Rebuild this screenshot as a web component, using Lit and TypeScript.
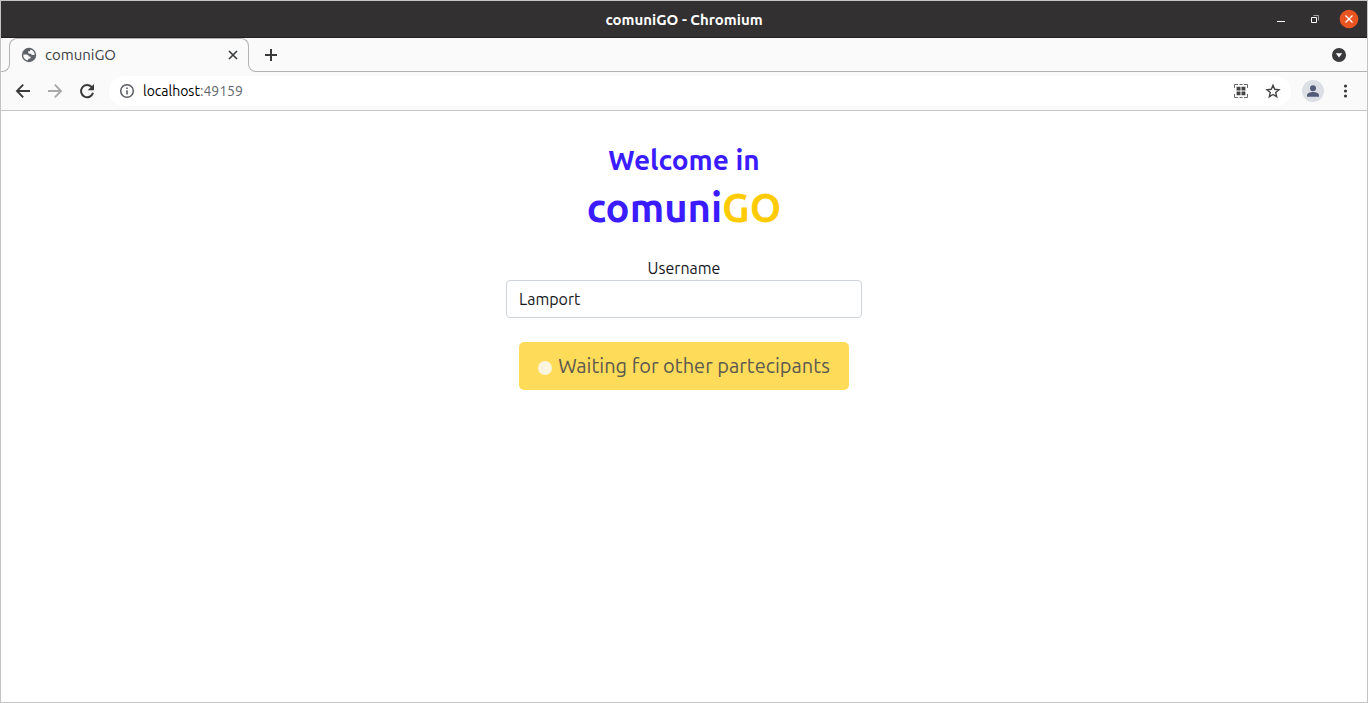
import { LitElement, html, css } from "lit";
import { customElement, property } from "lit/decorators.js";

@customElement("window-titlebar")
class WindowTitlebar extends LitElement {
  @property() heading = "";

  static styles = css`
    .bar {
      display: grid;
      grid-template-columns: 1fr auto 1fr;
      align-items: center;
      height: 37px;
      box-sizing: border-box;
      background: #323030;
      border-bottom: 1px solid #211f1f;
      color: #ffffff;
    }
    .title {
      grid-column: 2;
      margin: 0;
      padding-top: 2px;
      font-size: 15px;
      line-height: 20px;
      font-weight: 700;
    }
    .controls {
      display: flex;
      justify-content: flex-end;
      gap: 14px;
      padding-right: 8px;
    }
    button {
      display: block;
      width: 20px;
      height: 20px;
      padding: 0;
      border: 0;
      background: none;
    }
    svg {
      display: block;
    }
  `;

  render() {
    return html`
      <header class="bar">
        <h1 class="title">${this.heading}</h1>
        <div class="controls">
          <button aria-label="Minimize">
            <svg width="20" height="20"><path d="M6 12h8v1H6z" fill="#fff" /></svg>
          </button>
          <button aria-label="Restore">
            <svg width="20" height="20" fill="none">
              <path d="M8.500 6.500h5v5" stroke="#a5a4a4" />
              <path d="M6.500 8.500h5v5h-5z" stroke="#fff" />
            </svg>
          </button>
          <button aria-label="Close">
            <svg width="20" height="20">
              <circle cx="10" cy="10" r="9.300" fill="#e95420" />
              <path d="M6.500 6.500l7 7M13.500 6.500l-7 7" stroke="#fff" stroke-width="1.400" />
            </svg>
          </button>
        </div>
      </header>
    `;
  }
}

@customElement("browser-tabs")
class BrowserTabs extends LitElement {
  @property() heading = "";

  static styles = css`
    .strip {
      display: flex;
      height: 34px;
      background: #fafafa;
    }
    .edge {
      box-sizing: border-box;
      margin-top: 8px;
      border-bottom: 1px solid #b3b3b3;
    }
    .left {
      width: 9px;
      border-right: 1px solid #b3b3b3;
      border-bottom-right-radius: 8px;
    }
    .right {
      flex: 1;
      display: flex;
      align-items: flex-start;
      justify-content: space-between;
      margin-left: -1px;
      padding: 0 19px 0 13px;
      border-left: 1px solid #b3b3b3;
      border-bottom-left-radius: 8px;
    }
    .tab {
      box-sizing: border-box;
      display: flex;
      align-items: center;
      gap: 8px;
      width: 240px;
      height: 26px;
      margin-left: -1px;
      padding: 7px 7px 0 11px;
      border: 1px solid #b3b3b3;
      border-bottom: 0;
      border-radius: 8px 8px 0 0;
      color: #3c4043;
      font-size: 15px;
      line-height: 20px;
    }
    .name {
      flex: 1;
    }
    button {
      display: block;
      padding: 0;
      border: 0;
      background: none;
    }
    svg {
      display: block;
    }
  `;

  render() {
    return html`
      <div class="strip">
        <div class="edge left"></div>
        <div class="tab">
          <svg width="16" height="16" viewBox="0 0 16 16">
            <circle cx="8" cy="8" r="7.200" fill="#5f6368" />
            <path
              d="M2.300 7.600h2.900c1.400 0 2.400.7 2.600 1.900h1.700v2.100H7.700c-.2.900-.7 1.300-1.300 1.900A5.900 5.900 0 0 1 2.300 7.600z"
              fill="#fafafa"
            />
            <path
              d="M9.700 2.400l-.9 1.800H7.200v1.700l1.300.9h1.600l.5 1.300h1.600l1.500-.4c.1-2.500-1.500-4.600-4-5.300z"
              fill="#fafafa"
            />
          </svg>
          <span class="name">${this.heading}</span>
          <button aria-label="Close tab">
            <svg width="16" height="16">
              <path d="M4 4l8 8M12 4l-8 8" stroke="#3c4043" stroke-width="1.700" />
            </svg>
          </button>
        </div>
        <div class="edge right">
          <button aria-label="New tab">
            <svg width="18" height="18">
              <path d="M9 3v12M3 9h12" stroke="#3a3a3a" stroke-width="2" />
            </svg>
          </button>
          <button aria-label="Search tabs">
            <svg width="18" height="18">
              <circle cx="9" cy="9" r="7" fill="#3a3a3c" />
              <path d="M5.800 7.300h6.400L9 11.500z" fill="#fff" />
            </svg>
          </button>
        </div>
      </div>
    `;
  }
}

@customElement("browser-toolbar")
class BrowserToolbar extends LitElement {
  static styles = css`
    .bar {
      display: flex;
      align-items: center;
      height: 39px;
      box-sizing: border-box;
      padding: 0 11px 0 12px;
      background: #fafafa;
      border-bottom: 1px solid #c6c6c6;
    }
    .nav {
      display: flex;
      gap: 12px;
      margin-right: 12px;
    }
    .omnibox {
      flex: 1;
      display: flex;
      align-items: center;
      height: 30px;
      box-sizing: border-box;
      padding: 0 8px;
      gap: 6px;
      border-radius: 15px;
      background: #ffffff;
    }
    .url {
      flex: 1;
      font-size: 14px;
      line-height: 20px;
      color: #62666c;
    }
    .host {
      color: #000000;
    }
    .actions {
      display: flex;
      gap: 12px;
    }
    .menu {
      display: flex;
      align-items: center;
      gap: 12px;
      margin-left: 11px;
    }
    button {
      display: block;
      padding: 0;
      border: 0;
      background: none;
    }
    svg {
      display: block;
    }
  `;

  render() {
    return html`
      <nav class="bar">
        <div class="nav">
          <button aria-label="Back">
            <svg width="20" height="20" fill="none" stroke="#3a3a3a" stroke-width="1.900">
              <path d="M17 10H4.500M10.200 3.700L4 10l6.200 6.300" />
            </svg>
          </button>
          <button aria-label="Forward">
            <svg width="20" height="20" fill="none" stroke="#a9a9a9" stroke-width="1.900">
              <path d="M3 10h12.500M9.800 3.700L16 10l-6.200 6.300" />
            </svg>
          </button>
          <button aria-label="Reload">
            <svg width="20" height="20" fill="none">
              <path d="M14.600 6A6.100 6.100 0 1 0 16 11.800" stroke="#3a3a3a" stroke-width="2" />
              <path d="M17 3v6.300h-6.300z" fill="#3a3a3a" />
            </svg>
          </button>
        </div>
        <div class="omnibox">
          <button aria-label="View site information">
            <svg width="20" height="20" fill="none">
              <circle cx="10" cy="10" r="6.300" stroke="#5a5d62" stroke-width="1.500" />
              <path d="M9.200 6.500h1.600v1.600H9.200zM9.200 9.200h1.600v4.300H9.200z" fill="#5a5d62" />
            </svg>
          </button>
          <span class="url"><span class="host">localhost</span>:49159</span>
          <div class="actions">
            <button aria-label="Create QR code">
              <svg width="20" height="20" fill="none">
                <path
                  d="M3.500 7V3.500H7M13 3.500h3.500V7M16.500 13v3.500H13M7 16.500H3.500V13M8.500 3.500h3M8.500 16.500h3"
                  stroke="#6a6a6a"
                />
                <path
                  d="M5.600 5.700h3.900v3.800H5.600zM10.500 5.700h3.900v3.800h-3.900zM5.600 10.500h3.900v3.800H5.600zM10.500 10.500h3.900v3.800h-3.900z"
                  fill="#444"
                />
              </svg>
            </button>
            <button aria-label="Bookmark this tab">
              <svg width="20" height="20" fill="none">
                <path
                  d="M10 4.300l1.700 4 4.300.4-3.300 2.800 1 4.200L10 13.500l-3.700 2.200 1-4.200L4 8.700l4.300-.4z"
                  stroke="#454545"
                  stroke-width="1.400"
                />
              </svg>
            </button>
          </div>
        </div>
        <div class="menu">
          <button aria-label="Profile">
            <svg width="22" height="22">
              <circle cx="11" cy="11" r="11" fill="#dcdfe6" />
              <circle cx="11" cy="8.200" r="3" fill="#535c78" />
              <path d="M5 16.700v-1.500c0-2.200 3.500-3.200 6-3.200s6 1 6 3.200v1.500z" fill="#535c78" />
            </svg>
          </button>
          <button aria-label="Menu">
            <svg width="20" height="20" fill="#3a3a3a">
              <circle cx="9.500" cy="5" r="1.600" />
              <circle cx="9.500" cy="10" r="1.600" />
              <circle cx="9.500" cy="15" r="1.600" />
            </svg>
          </button>
        </div>
      </nav>
    `;
  }
}

@customElement("welcome-page")
class WelcomePage extends LitElement {
  static styles = css`
    .page {
      display: flex;
      flex-direction: column;
      align-items: center;
      padding: 32px 12px;
      color: #15181c;
      text-align: center;
    }
    h2 {
      margin: 0;
      color: #3a1cff;
      font-size: 28px;
      line-height: 33px;
      font-weight: 600;
    }
    .brand {
      margin-top: 8px;
      font-size: 40px;
      line-height: 48px;
    }
    .accent {
      color: #ffcb05;
    }
    form {
      display: flex;
      flex-direction: column;
      align-items: center;
      width: 100%;
      max-width: 356px;
      margin-top: 24px;
      font-size: 16px;
      line-height: 24px;
    }
    input {
      box-sizing: border-box;
      width: 100%;
      height: 38px;
      padding: 6px 12px;
      border: 1px solid #ced4da;
      border-radius: 4px;
      background: #ffffff;
      color: #15181c;
      font: inherit;
    }
    .submit {
      display: flex;
      align-items: center;
      gap: 6px;
      margin-top: 24px;
      padding: 8px 19px;
      border: 0;
      border-radius: 5px;
      background: #ffdb5a;
      color: #5b594f;
      font-family: inherit;
      font-size: 20px;
      line-height: 32px;
      white-space: nowrap;
    }
    .spinner {
      width: 14px;
      height: 14px;
      margin-top: 3px;
      border-radius: 50%;
      background: #fcf5de;
    }
  `;

  render() {
    return html`
      <main class="page">
        <h2>Welcome in</h2>
        <h2 class="brand">comuni<span class="accent">GO</span></h2>
        <form>
          <label for="username">Username</label>
          <input id="username" type="text" .value=${"Lamport"} />
          <button class="submit" type="submit" disabled>
            <span class="spinner"></span>
            <span>Waiting for other partecipants</span>
          </button>
        </form>
      </main>
    `;
  }
}

@customElement("app-root")
class AppRoot extends LitElement {
  static styles = css`
    :host {
      display: block;
      box-sizing: border-box;
      min-height: 100vh;
      border: 1px solid #c4c4c4;
      background: #ffffff;
      font-family: Ubuntu, "Noto Sans", "Open Sans", sans-serif;
    }
  `;

  render() {
    return html`
      <window-titlebar heading="comuniGO - Chromium"></window-titlebar>
      <browser-tabs heading="comuniGO"></browser-tabs>
      <browser-toolbar></browser-toolbar>
      <welcome-page></welcome-page>
    `;
  }
}
